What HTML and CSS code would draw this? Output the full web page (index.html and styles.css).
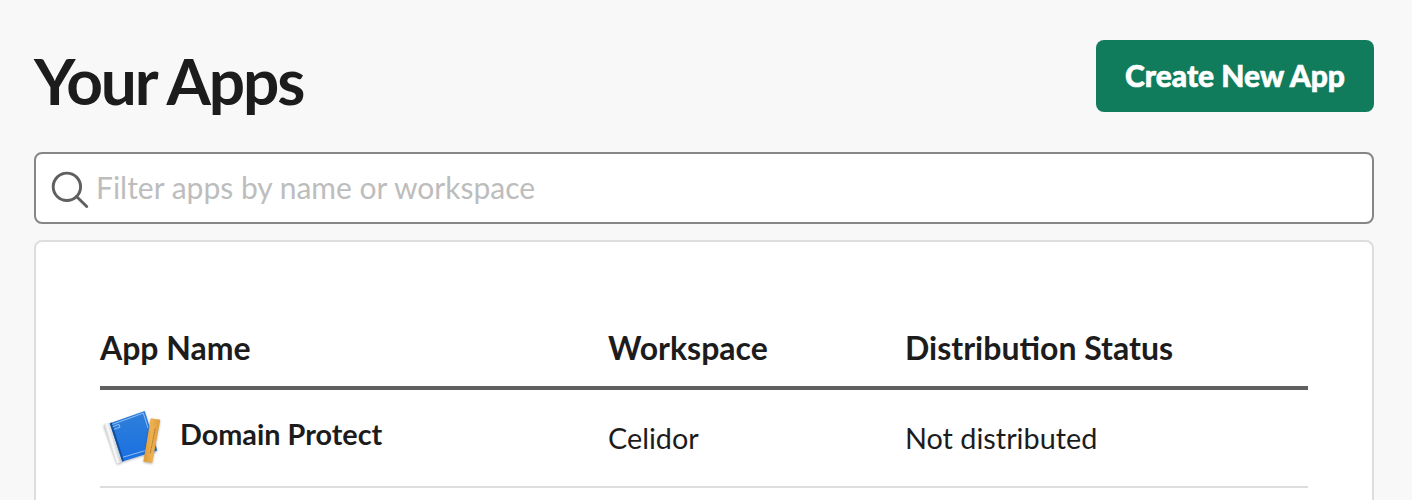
FILE: index.html
```html
<!DOCTYPE html>
<html lang="en">
<head>
<meta charset="utf-8">
<title>Your Apps</title>
<link rel="stylesheet" href="styles.css">
</head>
<body>
<main class="page">
  <header class="header">
    <h1 class="title">Your Apps</h1>
    <button class="create" type="button">Create New App</button>
  </header>
  <div class="search">
    <svg class="search-icon" viewBox="0 0 40 40"><circle cx="16.900" cy="18.800" r="13.700"/><path d="M26.500 28.500L36.700 38.500" stroke-linecap="round"/></svg>
    <span class="placeholder">Filter apps by name or workspace</span>
  </div>
  <section class="card">
    <div class="row head"><span>App Name</span><span>Workspace</span><span>Distribution Status</span></div>
    <div class="row app">
      <div class="name">
        <svg class="app-icon" viewBox="0 0 64 64">
          <defs>
            <linearGradient id="cover" x1="0" y1="0" x2="0" y2="1"><stop offset="0" stop-color="#2f7fd9"/><stop offset="1" stop-color="#1b70e2"/></linearGradient>
            <linearGradient id="spine" gradientUnits="userSpaceOnUse" x1="9" y1="38" x2="16" y2="36"><stop offset="0" stop-color="#d2d2d2"/><stop offset=".45" stop-color="#fafafa"/><stop offset="1" stop-color="#c9cbce"/></linearGradient>
            <linearGradient id="wood" x1="0" y1="0" x2="1" y2="0"><stop offset="0" stop-color="#dc9a38"/><stop offset=".5" stop-color="#eeb050"/><stop offset="1" stop-color="#dd9b37"/></linearGradient>
          </defs>
          <g class="shadow">
            <path d="M3.500 19.200Q5.500 17 9.800 17.300L22.300 55.200Q20 57.800 16.800 57.300Z" fill="url(#spine)"/>
            <path d="M9.800 17.300L44.700 5 57.300 44.600 22.300 55.400Z" fill="url(#cover)"/>
          </g>
          <path d="M9.800 17.300L11.800 16.600 24 54.900 22.300 55.400Z" fill="#104f9f"/>
          <path d="M12.300 18.400L43.300 7.200 48 22M23 51.200L45 44.700M12.700 20.700L19 18.300 20 21.200 13.900 23.300" fill="none" stroke="#a9d0fa" stroke-width=".8"/>
          <path class="shadow" d="M50.700 12.200L60.300 13.700 52.200 57 43.400 55.500Z" fill="url(#wood)"/>
          <path d="M55.200 22.500L50.300 47.500" stroke="#94692b" stroke-width=".8" stroke-dasharray="1.200 .500"/>
        </svg>
        <strong>Domain Protect</strong>
      </div>
      <span>Celidor</span><span>Not distributed</span>
    </div>
  </section>
</main>
</body>
</html>
```
FILE: styles.css
```css
* { box-sizing: border-box; }
body { margin: 0; background: #f8f8f8; color: #1d1c1d; font-family: Lato, sans-serif; }
.page { padding: 40px 38px 0 34px; }
.header { display: flex; justify-content: space-between; height: 112px; }
.title { margin: 0; padding-top: 3px; font-size: 64px; line-height: 76px; font-weight: 700; letter-spacing: -2.1px; }
.create { width: 278px; height: 72px; padding: 0 0 2px; border: 0; border-radius: 8px; background: #107c5b; color: #fff; font: 900 30px Lato, sans-serif; -webkit-text-stroke: .6px #fff; }
.search { display: flex; height: 72px; padding: 14px; border: 2px solid #868686; border-radius: 8px; background: #fff; }
.search-icon { width: 40px; height: 40px; margin-right: 6px; fill: none; stroke: #616061; stroke-width: 2.9; }
.placeholder { color: #bdbdbd; font-size: 30px; line-height: 38px; }
.card { height: 260px; margin-top: 16px; padding: 84px 64px 0; border: 2px solid #ddd; border-bottom: 0; border-radius: 8px 8px 0 0; background: #fff; }
.row { display: grid; grid-template-columns: 508px 297px 1fr; }
.head { height: 64px; border-bottom: 4px solid #616061; font-size: 32px; line-height: 43px; font-weight: 700; }
.app { height: 98px; border-bottom: 2px solid #ddd; font-size: 28.8px; line-height: 97px; }
.name { display: flex; height: 96px; }
.name strong { line-height: 89px; }
.app-icon { width: 64px; height: 64px; margin: 16px 16px 0 0; }
.shadow { filter: drop-shadow(0 1px 1px rgb(0 0 0 / .3)); }
```
